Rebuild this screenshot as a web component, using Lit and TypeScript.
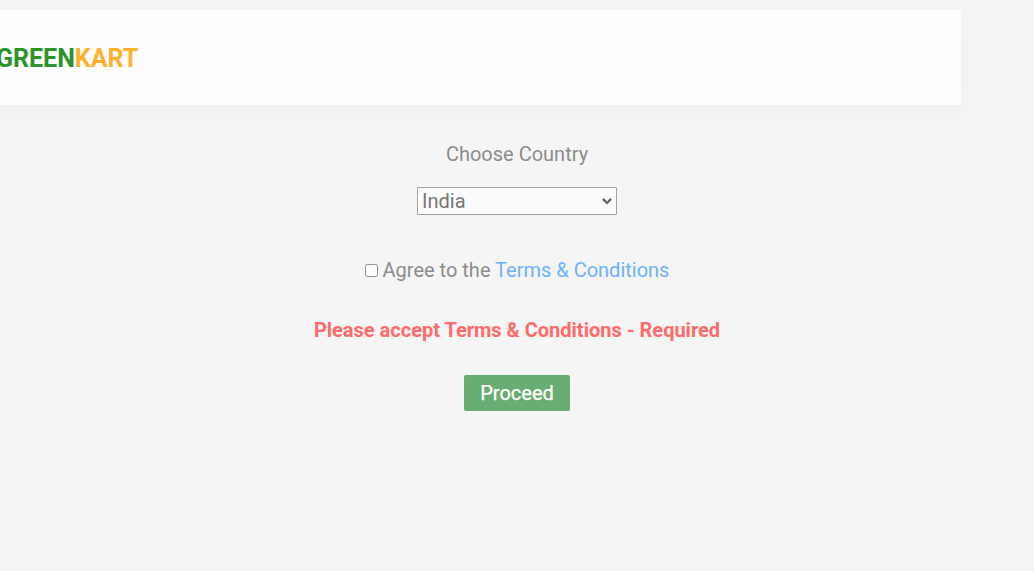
import { LitElement, html, css } from "lit";
import { customElement } from "lit/decorators.js";

@customElement("app-root")
export class AppRoot extends LitElement {
  static styles = css`
    :host {
      display: block;
      height: 571px;
      overflow: hidden;
      background: #f5f5f5;
      font-family: Roboto, sans-serif;
      font-size: 20px;
      line-height: 24px;
      color: #8c8c8c;
    }
    * { box-sizing: border-box; }
    .page { display: flex; flex-direction: column; padding-top: 10px; }
    header {
      width: 1001px;
      height: 95px;
      margin-left: -40px;
      padding: 2px 0 0 36px;
      background: #fdfdfd;
      box-shadow: 0 8px 20px rgba(0, 0, 0, 0.03);
      display: flex;
      align-items: center;
    }
    .brand { font-size: 25px; line-height: 29px; font-weight: 700; color: #2a932a; }
    .brand span { color: #ffb02c; }
    main { display: flex; flex-direction: column; align-items: center; padding-top: 37px; }
    .country { display: grid; width: 200px; height: 28px; margin-top: 21px; align-items: center; }
    .country > * { grid-area: 1 / 1; }
    select {
      appearance: none;
      width: 200px;
      height: 28px;
      padding: 0 20px 0 4px;
      font: inherit;
      color: #777;
      background: #fbfbfb;
      border: 1px solid #a3a3a3;
      border-radius: 1px;
    }
    .chevron {
      justify-self: end;
      margin-right: 5px;
      width: 10px;
      height: 8px;
      pointer-events: none;
      fill: none;
      stroke: #656565;
      stroke-width: 2.2;
    }
    .agree { display: flex; align-items: center; margin-top: 43px; }
    input { width: 13px; height: 13px; margin: 0 5px 0 0; opacity: 0.8; }
    .agree a { color: #6db2ff; text-decoration: none; }
    .error { margin-top: 36px; font-weight: 700; color: #ff6b6b; }
    button {
      width: 106px;
      height: 36px;
      margin-top: 33px;
      padding: 0;
      border: 0;
      border-radius: 2px;
      background: #6aad74;
      color: #fff;
      font: inherit;
      -webkit-text-stroke: 0.25px #fff;
    }
  `;

  render() {
    return html`
      <div class="page">
        <header><div class="brand">GREEN<span>KART</span></div></header>
        <main>
          <label for="country">Choose Country</label>
          <div class="country">
            <select id="country"><option>India</option></select>
            <svg class="chevron" viewBox="0 0 10 8"><path d="M.9 1.9 5 6 9.1 1.9" /></svg>
          </div>
          <div class="agree">
            <input type="checkbox" id="agree" />
            <label for="agree">Agree to the <a href="#">Terms &amp; Conditions</a></label>
          </div>
          <div class="error">Please accept Terms &amp; Conditions - Required</div>
          <button>Proceed</button>
        </main>
      </div>
    `;
  }
}
